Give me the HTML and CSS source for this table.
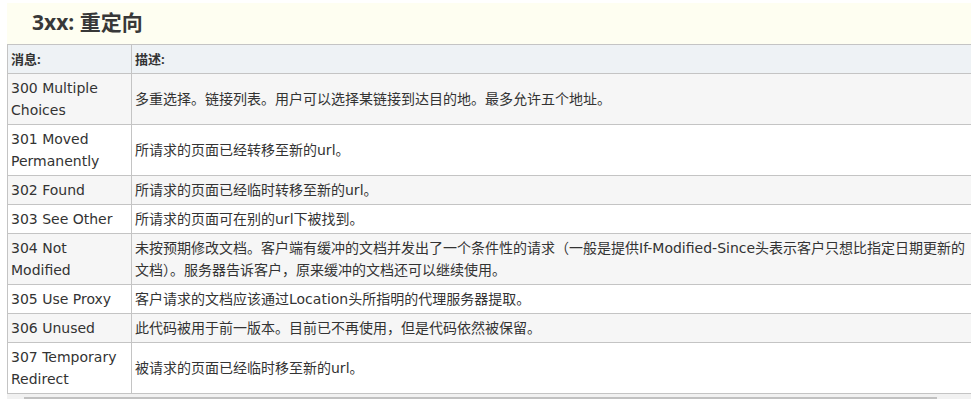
FILE: index.html
```html
<!DOCTYPE html>
<html lang="zh-CN">
<head>
<meta charset="utf-8">
<title>3xx: 重定向</title>
<link rel="stylesheet" href="styles.css">
</head>
<body>
<div class="page">
  <h2 class="title">3xx: 重定向</h2>
  <div class="scroller">
    <table class="codes">
      <thead>
        <tr><th class="c1">消息:</th><th class="c2">描述:</th></tr>
      </thead>
      <tbody>
        <tr><td>300 Multiple Choices</td><td>多重选择。链接列表。用户可以选择某链接到达目的地。最多允许五个地址。</td></tr>
        <tr><td>301 Moved Permanently</td><td>所请求的页面已经转移至新的url。</td></tr>
        <tr><td>302 Found</td><td>所请求的页面已经临时转移至新的url。</td></tr>
        <tr><td>303 See Other</td><td>所请求的页面可在别的url下被找到。</td></tr>
        <tr><td>304 Not Modified</td><td>未按预期修改文档。客户端有缓冲的文档并发出了一个条件性的请求（一般是提供If-Modified-Since头表示客户只想比指定日期更新的文档）。服务器告诉客户，原来缓冲的文档还可以继续使用。</td></tr>
        <tr><td>305 Use Proxy</td><td>客户请求的文档应该通过Location头所指明的代理服务器提取。</td></tr>
        <tr><td>306 Unused</td><td>此代码被用于前一版本。目前已不再使用，但是代码依然被保留。</td></tr>
        <tr><td>307 Temporary Redirect</td><td>被请求的页面已经临时移至新的url。</td></tr>
      </tbody>
    </table>
    <div class="hscroll"><div class="thumb"></div></div>
  </div>
</div>
</body>
</html>
```
FILE: styles.css
```css
html, body {
  margin: 0;
  padding: 0;
  background: #fff;
  overflow: hidden;
}
.page {
  width: 1000px;
  padding: 3px 0 0 7px;
  font-family: "DejaVu Sans", "Noto Sans CJK SC", sans-serif;
  color: #333;
}
.title {
  margin: 0;
  height: 41px;
  box-sizing: border-box;
  padding: 6px 0 0 25px;
  background: #fefef1;
  font-family: "Open Sans", "Noto Sans CJK SC", sans-serif;
  font-size: 21px;
  line-height: 27px;
  font-weight: 700;
  color: #383838;
}
.codes {
  width: 974px;
  border-collapse: collapse;
  font-size: 14px;
  line-height: 22px;
}
.codes th, .codes td {
  border: 1px solid #c4c4c4;
  padding: 3px 3px;
  text-align: left;
  vertical-align: middle;
}
.codes th {
  background: #eef2f5;
  font-family: "Open Sans", "Noto Sans CJK SC", sans-serif;
  font-size: 13px;
  font-weight: 700;
}
.codes .c1 { width: 117px; }
.codes tbody tr:nth-child(odd) { background: #f6f6f6; }
.codes tbody tr:nth-child(even) { background: #fff; }
.hscroll {
  height: 15px;
  background: #f1f1f1;
  padding-top: 3px;
  box-sizing: border-box;
}
.thumb {
  margin-left: 17px;
  width: 913px;
  height: 9px;
  background: #c1c1c1;
}
```
